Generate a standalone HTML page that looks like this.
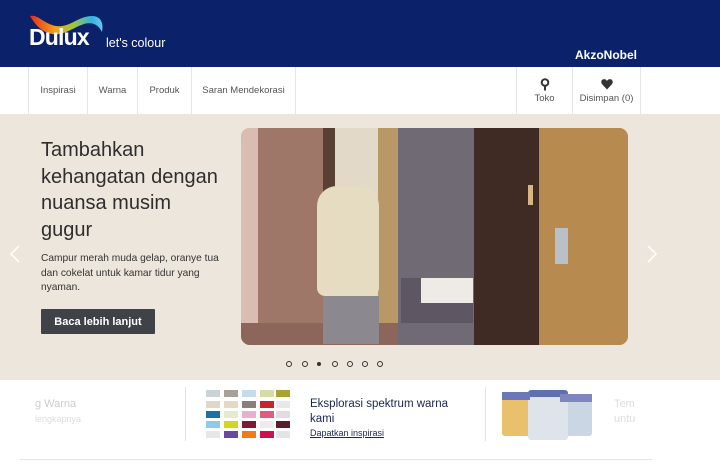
<!DOCTYPE html>
<html><head><meta charset="utf-8">
<style>
*{margin:0;padding:0;box-sizing:border-box}
body{width:720px;height:473px;overflow:hidden;background:#fff;font-family:"Liberation Sans",Arial,sans-serif;position:relative}
.a{position:absolute}
#hdr{left:0;top:0;width:720px;height:67px;background:#0b2169}
#nav{left:0;top:67px;width:720px;height:47px;background:#fff}
.ni{position:absolute;top:0;height:47px;border-left:1px solid #e6e6e6;font-size:9.5px;color:#555;display:flex;align-items:center;justify-content:center}
#hero{left:0;top:114px;width:720px;height:266px;background:#ede6dc}
h1{position:absolute;left:41px;top:137px;font-size:20px;font-weight:normal;color:#2e2e2e;line-height:26.5px;width:200px;white-space:nowrap}
.p{left:41px;top:252px;font-size:10.2px;color:#333;line-height:14.5px;width:185px}
.btn{left:41px;top:309px;width:114px;height:25px;background:#3f4347;color:#fff;font-size:11px;font-weight:bold;display:flex;align-items:center;justify-content:center;border-radius:1px}
#img{left:241px;top:128px;width:387px;height:217px;border-radius:9px;overflow:hidden;background:#b88a4e}
#img div{position:absolute;top:0;height:217px}
.dot{position:absolute;top:361px;width:6px;height:6px;border:1px solid #333;border-radius:50%}
</style></head><body>
<div id="hdr" class="a">
<svg class="a" style="left:28px;top:12px" width="80" height="25" viewBox="0 0 80 25">
<defs><linearGradient id="g" x1="0" x2="1"><stop offset="0" stop-color="#e52a1f"/><stop offset=".35" stop-color="#f6a21a"/><stop offset=".6" stop-color="#9cc93a"/><stop offset=".85" stop-color="#2fb3e6"/><stop offset="1" stop-color="#6bc6ef"/></linearGradient></defs>
<path d="M2 4 C10 2 16 12 28 14 C42 16 50 4 64 4 C72 4 76 10 74 20 C70 12 64 10 56 12 C44 16 36 24 24 22 C14 20 8 14 2 4Z" fill="url(#g)"/>
</svg>
<div class="a" style="left:29px;top:24px;color:#fff;font-weight:bold;font-size:23px;letter-spacing:-0.8px">Dulux</div>
<div class="a" style="left:106px;top:36px;color:#fff;font-size:12.5px">let's colour</div>
<div class="a" style="left:575px;top:48px;color:#fff;font-weight:bold;font-size:12px">AkzoNobel</div>
</div>
<div id="nav" class="a">
<div class="ni" style="left:28px;width:59px">Inspirasi</div>
<div class="ni" style="left:87px;width:50px">Warna</div>
<div class="ni" style="left:137px;width:54px">Produk</div>
<div class="ni" style="left:191px;width:105px;border-right:1px solid #e6e6e6">Saran Mendekorasi</div>
<div class="ni" style="left:516px;width:56px;flex-direction:column"><svg width="10" height="13" viewBox="0 0 10 13"><circle cx="5" cy="4.5" r="3.3" fill="none" stroke="#333" stroke-width="2"/><path d="M5 8v4.5" stroke="#333" stroke-width="2"/></svg><span style="margin-top:2px">Toko</span></div>
<div class="ni" style="left:572px;width:69px;flex-direction:column;border-right:1px solid #e6e6e6"><svg width="12" height="12" viewBox="0 0 11 10"><path d="M5.5 10 1 5.2C-.5 3.4.4.5 2.8.5c1.3 0 2.2.8 2.7 1.7C6 1.3 6.9.5 8.2.5c2.4 0 3.3 2.9 1.8 4.7z" fill="#333"/></svg><span style="margin-top:3px">Disimpan (0)</span></div>
</div>
<div id="hero" class="a"></div>
<h1>Tambahkan<br>kehangatan dengan<br>nuansa musim<br>gugur</h1>
<div class="a p">Campur merah muda gelap, oranye tua dan cokelat untuk kamar tidur yang nyaman.</div>
<div class="a btn">Baca lebih lanjut</div>
<svg class="a" style="left:9px;top:245px" width="12" height="18"><path d="M10 1 2 9l8 8" fill="none" stroke="#fff" stroke-width="1.5"/></svg>
<svg class="a" style="left:646px;top:245px" width="12" height="18"><path d="M2 1l8 8-8 8" fill="none" stroke="#fff" stroke-width="1.5"/></svg>
<div id="img" class="a">
<div style="left:0;width:17px;background:#d9bcb2"></div>
<div style="left:17px;width:65px;background:#9f7769"></div>
<div style="left:82px;width:12px;background:#5a3f34"></div>
<div style="left:94px;width:43px;background:#e2d9c8"></div>
<div style="left:137px;width:20px;background:#b89866"></div>
<div style="left:157px;width:76px;background:#6f6a73"></div>
<div style="left:233px;width:65px;background:#3f2b24"></div>
<div style="left:298px;width:89px;background:#b78a4f"></div>
<div style="left:0;top:195px;height:22px;width:157px;background:#8c665a"></div>
<div style="left:160px;top:150px;width:72px;height:45px;background:#5e5663"></div>
<div style="left:180px;top:150px;width:52px;height:25px;background:#eeeae6"></div>
<div style="left:76px;top:58px;width:62px;height:110px;background:#e6dcc2;border-radius:20px 20px 8px 8px"></div>
<div style="left:82px;top:168px;width:56px;height:48px;background:#8c8890"></div>
<div style="left:314px;top:100px;width:13px;height:36px;background:#b9c0c8"></div>
<div style="left:287px;top:57px;width:5px;height:20px;background:#d8b683"></div>
</div>
<div class="dot" style="left:286px"></div><div class="dot" style="left:302px"></div>
<div class="dot" style="left:317px;width:4px;height:4px;top:362px;background:#333"></div>
<div class="dot" style="left:332px"></div><div class="dot" style="left:347px"></div><div class="dot" style="left:362px"></div><div class="dot" style="left:377px"></div>
<div class="a" style="left:35px;top:398px;font-size:11px;color:#ccc">g Warna</div>
<div class="a" style="left:35px;top:414px;font-size:9px;color:#ddd">lengkapnya</div>
<div class="a" style="left:185px;top:387px;width:1px;height:54px;background:#e4e4e4"></div>
<div class="a" style="left:485px;top:387px;width:1px;height:54px;background:#e4e4e4"></div>
<svg class="a" style="left:206px;top:390px" width="84" height="50">
<g>
<rect x="0" y="0" width="14" height="7" fill="#c9d4d6"/><rect x="18" y="0" width="14" height="7" fill="#a8a096"/><rect x="36" y="0" width="14" height="7" fill="#c6dcec"/><rect x="54" y="0" width="14" height="7" fill="#d7dba8"/><rect x="70" y="0" width="14" height="7" fill="#a7a231"/>
<rect x="0" y="11" width="14" height="7" fill="#ddd8c9"/><rect x="18" y="11" width="14" height="7" fill="#e6d9c0"/><rect x="36" y="11" width="14" height="7" fill="#8c7f7a"/><rect x="54" y="11" width="14" height="7" fill="#c4262b"/><rect x="70" y="11" width="14" height="7" fill="#e8e8e8"/>
<rect x="0" y="21" width="14" height="7" fill="#1e6fa5"/><rect x="18" y="21" width="14" height="7" fill="#e6ebc9"/><rect x="36" y="21" width="14" height="7" fill="#e7b0cf"/><rect x="54" y="21" width="14" height="7" fill="#e05c7c"/><rect x="70" y="21" width="14" height="7" fill="#e6d9e2"/>
<rect x="0" y="31" width="14" height="7" fill="#8ccbe9"/><rect x="18" y="31" width="14" height="7" fill="#d2d621"/><rect x="36" y="31" width="14" height="7" fill="#7b1a34"/><rect x="54" y="31" width="14" height="7" fill="#ececec"/><rect x="70" y="31" width="14" height="7" fill="#5b1c2a"/>
<rect x="0" y="41" width="14" height="7" fill="#e7e7e7"/><rect x="18" y="41" width="14" height="7" fill="#6a4a9c"/><rect x="36" y="41" width="14" height="7" fill="#ef7b1a"/><rect x="54" y="41" width="14" height="7" fill="#c8134e"/><rect x="70" y="41" width="14" height="7" fill="#e3e3ea"/>
</g></svg>
<div class="a" style="left:310px;top:397px;font-size:11.5px;color:#1a2550;line-height:15px;width:150px">Eksplorasi spektrum warna kami</div>
<div class="a" style="left:310px;top:428px;font-size:9px;color:#1a2550;text-decoration:underline">Dapatkan inspirasi</div>
<div class="a" style="left:502px;top:392px;width:28px;height:44px;background:#e9c06c;border-radius:3px"></div>
<div class="a" style="left:560px;top:394px;width:32px;height:42px;background:#cbd6e4;border-radius:3px"></div>
<div class="a" style="left:528px;top:390px;width:40px;height:50px;background:#dfe3ea;border-radius:3px;border-top:7px solid #5f6fb0"></div>
<div class="a" style="left:502px;top:392px;width:28px;height:8px;background:#6a77b8"></div>
<div class="a" style="left:560px;top:394px;width:32px;height:8px;background:#7d86bd"></div>
<div class="a" style="left:614px;top:397px;font-size:11px;color:#ddd;line-height:15px">Tem<br>untu</div>
<div class="a" style="left:20px;top:459px;width:632px;height:1px;background:#e6e6e6"></div>
</body></html>
